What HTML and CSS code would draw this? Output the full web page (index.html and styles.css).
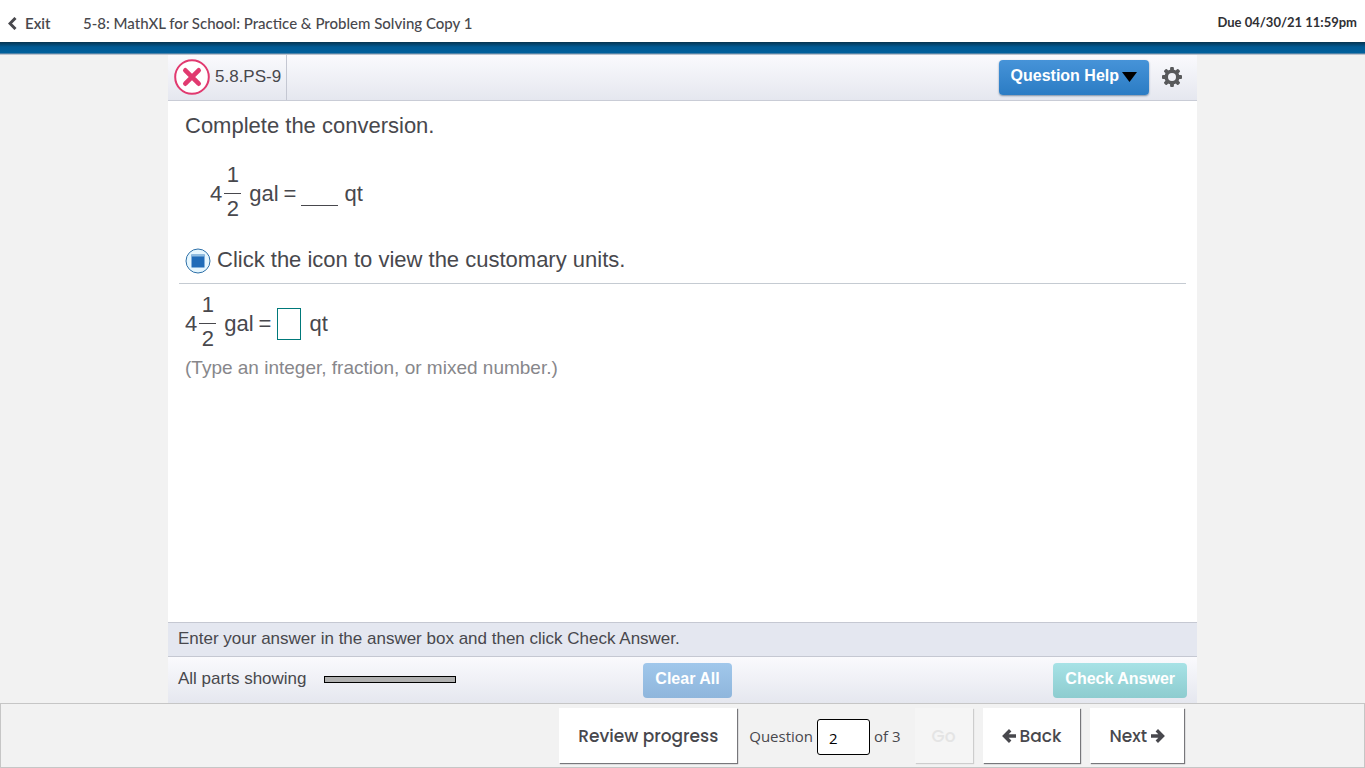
FILE: index.html
```html
<!DOCTYPE html>
<html lang="en">
<head>
<meta charset="utf-8">
<title>5-8: MathXL for School</title>
<link rel="stylesheet" href="styles.css">
</head>
<body>
<header class="topbar">
  <a class="exit" href="#">
    <svg width="9" height="13" viewBox="0 0 9 13" aria-hidden="true"><path d="M7.5 1 2 6.5 7.5 12" fill="none" stroke="currentColor" stroke-width="3"/></svg>
    <span>Exit</span>
  </a>
  <h1 class="title">5-8: MathXL for School: Practice &amp; Problem Solving Copy 1</h1>
  <span class="due">Due 04/30/21 11:59pm</span>
</header>
<div class="band"></div>
<main class="player">
  <div class="toolbar">
    <div class="question-id">
      <svg width="36" height="36" viewBox="0 0 36 36" role="img" aria-label="Incorrect"><circle cx="18" cy="18" r="16.8" fill="#fff" stroke="#e13a70" stroke-width="2"/><path d="m11.3 11.3 13.4 13.4M24.7 11.3 11.3 24.7" stroke="#e13a70" stroke-width="4.6" stroke-linecap="round"/></svg>
      <span>5.8.PS-9</span>
    </div>
    <button class="btn help" type="button">Question Help
      <svg width="15" height="11" viewBox="0 0 15 11" aria-hidden="true"><path d="M0 1h15L7.5 11z" fill="#000"/></svg>
    </button>
    <button class="gear" type="button" aria-label="Settings">
      <svg width="22" height="22" viewBox="0 0 22 22"><g fill="#58595b"><rect id="tooth" x="9.1" y="1" width="3.8" height="20" rx="1"/><use href="#tooth" transform="rotate(45 11 11)"/><use href="#tooth" transform="rotate(90 11 11)"/><use href="#tooth" transform="rotate(135 11 11)"/><circle cx="11" cy="11" r="7.6"/></g><circle cx="11" cy="11" r="4" fill="#f1f2f7"/></svg>
    </button>
  </div>
  <section class="content">
    <p class="prompt">Complete the conversion.</p>
    <div class="equation indented">
      <span>4</span><span class="fraction"><span class="num">1</span><span class="den">2</span></span>
      <span class="unit">gal</span><span class="equals">=</span><span class="blank"></span><span class="unit">qt</span>
    </div>
    <div class="resource">
      <button class="resource-button" type="button" aria-label="View the customary units">
        <svg width="26" height="26" viewBox="0 0 26 26"><circle cx="13" cy="13" r="12" fill="#e5f6fe" stroke="#2e70a8"/><path d="M6.5 6.5h13v13h-13z" fill="#1f6bb8"/><path d="M6.5 6h13v2.5h-13z" fill="#8fbce0"/></svg>
      </button>
      <span>Click the icon to view the customary units.</span>
    </div>
    <div class="equation task">
      <span>4</span><span class="fraction"><span class="num">1</span><span class="den">2</span></span>
      <span class="unit">gal</span><span class="equals">=</span><input class="answer" type="text" aria-label="Answer in quarts"><span class="unit">qt</span>
    </div>
    <p class="hint">(Type an integer, fraction, or mixed number.)</p>
  </section>
  <p class="instruction">Enter your answer in the answer box and then click Check Answer.</p>
  <div class="actions">
    <div class="parts"><span>All parts showing</span><span class="progress"></span></div>
    <button class="btn clear" type="button">Clear All</button>
    <button class="btn check" type="button">Check Answer</button>
  </div>
</main>
<footer class="footer">
  <nav class="pager">
    <button class="tile" type="button">Review progress</button>
    <div class="jump">
      <label for="question">Question</label>
      <input id="question" type="text" value="2">
      <span>of 3</span>
    </div>
    <button class="tile go" type="button" disabled>Go</button>
    <button class="tile" type="button"><svg width="15" height="14" viewBox="0 0 15 14" aria-hidden="true"><path d="M8.2 1.3 2.5 7l5.7 5.7M3 7h11" fill="none" stroke="currentColor" stroke-width="3.4"/></svg>Back</button>
    <button class="tile" type="button">Next<svg width="15" height="14" viewBox="0 0 15 14" aria-hidden="true"><path d="M6.8 1.3 12.5 7l-5.7 5.7M12 7H1" fill="none" stroke="currentColor" stroke-width="3.4"/></svg></button>
  </nav>
</footer>
</body>
</html>
```
FILE: styles.css
```css
* { box-sizing: border-box; }
body {
  margin: 0;
  min-height: 100vh;
  display: flex;
  flex-direction: column;
  background: #f2f2f2;
  color: #48484d;
  font: 17px/20px "Liberation Sans", Arial, sans-serif;
}
p, h1 { margin: 0; }
button, input { font: inherit; color: inherit; }
button { cursor: pointer; }
svg { display: block; flex: none; }

.topbar {
  display: flex;
  align-items: center;
  height: 42px;
  padding: 4px 8px 0;
  background: #fff;
  font-family: Lato, sans-serif;
  font-size: 15px;
}
.exit {
  display: flex;
  align-items: center;
  gap: 8px;
  width: 75px;
  color: #48484d;
  font-weight: 600;
  text-decoration: none;
}
.title { font-size: 15px; font-weight: 500; }
.due {
  margin-left: auto;
  padding-bottom: 3px;
  color: #303034;
  font-size: 13px;
  font-weight: 700;
}
.band {
  height: 13px;
  background: linear-gradient(#063450, #005a94 5px, #00609c 11px, #9aa4b4 12px, #dfe1e6);
}

.player {
  flex: 1;
  display: flex;
  flex-direction: column;
  width: 100%;
  max-width: 1029px;
  margin: 0 auto;
  background: #fff;
}
.toolbar {
  display: flex;
  align-items: center;
  height: 46px;
  padding-right: 14px;
  border-bottom: 1px solid #c9ccd6;
  background: linear-gradient(#fafafd, #e5e7ef);
}
.question-id {
  display: flex;
  align-items: center;
  gap: 5px;
  align-self: stretch;
  padding: 0 5px 1px 6px;
  border-right: 1px solid #c4c7d2;
}
.btn {
  height: 35px;
  padding: 0 12px 3px;
  border: 0;
  border-radius: 4px;
  color: #fff;
  font-size: 16px;
  font-weight: 700;
}
.help {
  display: flex;
  align-items: center;
  gap: 3px;
  margin-left: auto;
  background: linear-gradient(#4693d8, #2b7cc4);
  box-shadow: 0 1px 2px #7c8fa5;
}
.gear {
  margin-left: 12px;
  padding: 0 0 1px;
  border: 0;
  background: none;
}

.content {
  flex: 1;
  padding: 12px 11px;
  font-size: 22px;
  line-height: 26px;
}
.prompt { padding: 0 6px; }
.equation {
  display: flex;
  align-items: center;
  padding: 0 6px;
}
.indented { padding: 20px 31px 11px; }
.task { padding-top: 5px; }
.fraction {
  width: 17px;
  margin: 0 8px 0 2px;
  text-align: center;
}
.num, .den { display: block; }
.num {
  padding-bottom: 2px;
  border-bottom: 1px solid #48484d;
  line-height: 32px;
}
.den {
  padding-bottom: 4px;
  line-height: 30px;
}
.equals { margin: 0 5px; }
.blank {
  width: 37px;
  height: 24px;
  margin-right: 6px;
  border-bottom: 1px solid #48484d;
}
.resource {
  display: flex;
  align-items: center;
  gap: 6px;
  padding: 7px 6px 9px;
  border-bottom: 1px solid #c5cbd2;
}
.resource-button {
  padding: 2px 0 0;
  border: 0;
  background: none;
}
.answer {
  width: 24px;
  height: 32px;
  margin: 0 8px 0 1px;
  padding: 0 2px;
  border: 1px solid #00797a;
  background: #fff;
}
.hint {
  padding: 0 6px;
  color: #87878b;
  font-size: 19px;
  line-height: 20px;
}
.instruction {
  padding: 6px 10px 7px;
  border: solid #c5c8d2;
  border-width: 1px 0;
  background: #e4e7f0;
}
.actions {
  display: grid;
  grid-template-columns: 1fr auto 1fr;
  align-items: center;
  height: 46px;
  padding: 0 10px;
  background: linear-gradient(#fafafd, #e5e7ef);
}
.parts {
  display: flex;
  align-items: center;
  gap: 17px;
  padding-bottom: 2px;
}
.progress {
  width: 132px;
  height: 7px;
  border: 1px solid #000;
  background: #b0b0b0;
}
.clear { margin-left: 10px; background: linear-gradient(#a0c7eb, #8fb6dc); }
.check { justify-self: end; background: linear-gradient(#a7e2e6, #8dcccf); }

.footer {
  height: 65px;
  padding-top: 4px;
  border: 1px solid #c6c6c6;
}
.pager {
  display: flex;
  align-items: center;
  justify-content: flex-end;
  width: 100%;
  max-width: 1029px;
  margin: 0 auto;
  padding-right: 13px;
}
.tile {
  display: flex;
  align-items: center;
  justify-content: center;
  gap: 3px;
  height: 55px;
  padding: 0 19px;
  border: 0;
  background: #fff;
  box-shadow: 1px 1px 1px #77777b;
  font: 500 17px/24px Poppins, Inter, sans-serif;
}
.tile + .tile { margin-left: 10px; }
.jump {
  display: flex;
  align-items: center;
  gap: 4px;
  margin: 0 14px 0 12px;
  font: 15px/24px "Open Sans", sans-serif;
}
.jump input {
  width: 53px;
  height: 36px;
  margin-top: 2px;
  padding: 2px 11px 0;
  border: 1px solid #000;
  border-radius: 3px;
  background: #fff;
  color: #000;
}
.go {
  padding: 0 17px;
  background: #f5f5f5;
  color: #e4e4e4;
  box-shadow: 1px 1px 1px #cdcdcd;
}
```
